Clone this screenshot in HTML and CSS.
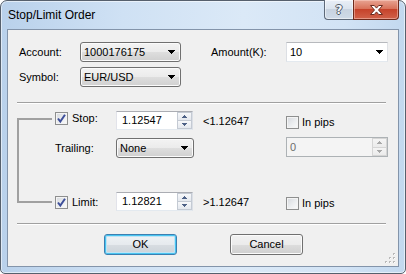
FILE: index.html
```html
<!DOCTYPE html>
<html>
<head>
<meta charset="utf-8">
<title>Stop/Limit Order</title>
<link rel="stylesheet" href="styles.css">
</head>
<body>
<div class="window">
  <div class="titlebar">
    <span class="title">Stop/Limit Order</span>
    <div class="caption-btns">
      <div class="cap-btn help"><span class="q">?</span></div>
      <div class="cap-btn close">
        <svg width="13" height="10" viewBox="0 0 13 10"><path d="M0.5 0.5H4.3L6.5 3.1L8.7 0.5H12.5L8.5 5L12.5 9.5H8.7L6.5 6.9L4.3 9.5H0.5L4.5 5Z" fill="#fff" stroke="#6a2c20" stroke-width="1"/></svg>
      </div>
    </div>
  </div>
  <div class="client">
    <div class="top-grid">
      <span class="lbl">Account:</span>
      <div class="combo"><span class="ctext">1000176175</span><svg class="arrow" width="7" height="4" viewBox="0 0 7 4"><path d="M0 0h7v1h-1v1h-1v1h-1v1h-1v-1h-1v-1h-1v-1h-1z"/></svg></div>
      <span></span>
      <span class="lbl">Amount(K):</span>
      <div class="combo edit"><span class="ctext">10</span><svg class="arrow" width="7" height="4" viewBox="0 0 7 4"><path d="M0 0h7v1h-1v1h-1v1h-1v1h-1v-1h-1v-1h-1v-1h-1z"/></svg></div>
      <span class="lbl">Symbol:</span>
      <div class="combo"><span class="ctext">EUR/USD</span><svg class="arrow" width="7" height="4" viewBox="0 0 7 4"><path d="M0 0h7v1h-1v1h-1v1h-1v1h-1v-1h-1v-1h-1v-1h-1z"/></svg></div>
    </div>

    <div class="sep"></div>

    <div class="mid-grid">
      <div class="bracket"></div>

      <div class="chk-cell stop-chk">
        <span class="chk checked"><svg width="11" height="11" viewBox="0 0 11 11"><path d="M2 5.5L4.3 8.5L9 1.8" fill="none" stroke="#3e4f9a" stroke-width="2"/></svg></span>
        <span class="chk-lbl">Stop:</span>
      </div>
      <div class="spin stop-spin">
        <span class="val">1.12547</span>
        <div class="spin-btns">
          <div class="sb"><svg width="5" height="3" viewBox="0 0 5 3"><path d="M2 0h1v1h1v1h1v1h-5v-1h1v-1h1z"/></svg></div>
          <div class="sb"><svg width="5" height="3" viewBox="0 0 5 3"><path d="M0 0h5v1h-1v1h-1v1h-1v-1h-1v-1h-1z"/></svg></div>
        </div>
      </div>
      <span class="ref-price stop-ref">&lt;1.12647</span>
      <div class="chk-cell pips-chk stop-pips">
        <span class="chk"></span>
        <span class="chk-lbl pips-lbl">In pips</span>
      </div>

      <span class="lbl trail-lbl">Trailing:</span>
      <div class="combo trail-combo"><span class="ctext">None</span><svg class="arrow" width="7" height="4" viewBox="0 0 7 4"><path d="M0 0h7v1h-1v1h-1v1h-1v1h-1v-1h-1v-1h-1v-1h-1z"/></svg></div>
      <div class="spin disabled trail-spin">
        <span class="val">0</span>
        <div class="spin-btns">
          <div class="sb"><svg width="5" height="3" viewBox="0 0 5 3"><path d="M2 0h1v1h1v1h1v1h-5v-1h1v-1h1z"/></svg></div>
          <div class="sb"><svg width="5" height="3" viewBox="0 0 5 3"><path d="M0 0h5v1h-1v1h-1v1h-1v-1h-1v-1h-1z"/></svg></div>
        </div>
      </div>

      <div class="chk-cell limit-chk">
        <span class="chk checked"><svg width="11" height="11" viewBox="0 0 11 11"><path d="M2 5.5L4.3 8.5L9 1.8" fill="none" stroke="#3e4f9a" stroke-width="2"/></svg></span>
        <span class="chk-lbl">Limit:</span>
      </div>
      <div class="spin limit-spin">
        <span class="val">1.12821</span>
        <div class="spin-btns">
          <div class="sb"><svg width="5" height="3" viewBox="0 0 5 3"><path d="M2 0h1v1h1v1h1v1h-5v-1h1v-1h1z"/></svg></div>
          <div class="sb"><svg width="5" height="3" viewBox="0 0 5 3"><path d="M0 0h5v1h-1v1h-1v1h-1v-1h-1v-1h-1z"/></svg></div>
        </div>
      </div>
      <span class="ref-price limit-ref">&gt;1.12647</span>
      <div class="chk-cell pips-chk limit-pips">
        <span class="chk"></span>
        <span class="chk-lbl pips-lbl">In pips</span>
      </div>
    </div>

    <div class="sep bottom-sep"></div>

    <div class="btn-row">
      <div class="btn default">OK</div>
      <div class="btn">Cancel</div>
    </div>

    <svg class="grip" width="11" height="11" viewBox="0 0 11 11">
      <g fill="#b9b9b9">
        <rect x="8" y="0" width="2" height="2"/>
        <rect x="4" y="4" width="2" height="2"/><rect x="8" y="4" width="2" height="2"/>
        <rect x="0" y="8" width="2" height="2"/><rect x="4" y="8" width="2" height="2"/><rect x="8" y="8" width="2" height="2"/>
      </g>
      <g fill="#ffffff">
        <rect x="9" y="1" width="1" height="1"/>
        <rect x="5" y="5" width="1" height="1"/><rect x="9" y="5" width="1" height="1"/>
        <rect x="1" y="9" width="1" height="1"/><rect x="5" y="9" width="1" height="1"/><rect x="9" y="9" width="1" height="1"/>
      </g>
    </svg>
  </div>
</div>
</body>
</html>
```
FILE: styles.css
```css
* { box-sizing: border-box; }
html, body { margin: 0; padding: 0; }
body {
  width: 406px;
  height: 274px;
  overflow: hidden;
  background: #ffffff;
  font-family: "Liberation Sans", Arial, sans-serif;
  font-size: 11px;
  color: #000;
}
.window {
  width: 406px;
  height: 274px;
  border: 1px solid #56606d;
  border-radius: 7px 7px 5px 5px;
  background: linear-gradient(to right, #b9d1eb 0%, #cfe1f4 30%, #dbe9f7 60%, #d2e3f5 85%, #c2d8ef 100%);
  padding: 0 6px 6px 6px;
  display: flex;
  flex-direction: column;
  box-shadow: inset 0 0 0 1px rgba(255,255,255,0.55);
}
.titlebar {
  height: 28px;
  flex: none;
  display: flex;
  justify-content: space-between;
  align-items: flex-start;
  padding-left: 1px;
}
.title {
  font-size: 12px;
  line-height: 15px;
  margin-top: 7px;
  color: #000;
}
.caption-btns {
  display: flex;
  margin-top: -1px;
}
.cap-btn {
  height: 20px;
  display: flex;
  align-items: center;
  justify-content: center;
  border: 1px solid #5d6979;
  border-top: none;
}
.help {
  width: 29px;
  border-right: none;
  border-radius: 0 0 0 4px;
  background: linear-gradient(to bottom, #e9eff7 0%, #dbe4ee 45%, #c8d3e0 50%, #cfdbe8 100%);
  box-shadow: inset 0 0 0 1px rgba(255,255,255,0.5);
}
.q {
  font-family: "DejaVu Sans", sans-serif;
  font-weight: bold;
  font-size: 12px;
  line-height: 14px;
  color: #f4f6f9;
  text-shadow: 1px 0 0 #4e5866, -1px 0 0 #4e5866, 0 1px 0 #4e5866, 0 -1px 0 #4e5866;
}
.close {
  width: 46px;
  border-color: #6e2a1c;
  border-radius: 0 0 4px 0;
  background: linear-gradient(to bottom, #e8a493 0%, #d9735b 45%, #c6432b 50%, #d1624a 100%);
  box-shadow: inset 0 0 0 1px rgba(255,220,210,0.45);
}
.client {
  flex: 1;
  position: relative;
  border: 1px solid #8394aa;
  background: #f0f0f0;
  display: flex;
  flex-direction: column;
}
.top-grid {
  display: grid;
  grid-template-columns: 61px 101px 30px 75px 102px;
  grid-template-rows: 20px 20px;
  row-gap: 5px;
  margin: 12px 0 0 11px;
}
.lbl {
  line-height: 20px;
  white-space: nowrap;
}
.combo {
  height: 20px;
  display: flex;
  align-items: center;
  justify-content: space-between;
  padding: 0 5px 0 3px;
  border: 1px solid #707070;
  border-radius: 3px;
  background: linear-gradient(to bottom, #f3f3f3 0%, #ebebeb 50%, #dedede 50%, #d0d0d0 100%);
  box-shadow: inset 0 0 0 1px #fbfbfb;
}
.combo.edit {
  border-radius: 0;
  border-color: #b7b9bd #e0e2e6 #e3e9ef #dcdfe4;
  background: #ffffff;
  box-shadow: none;
  padding: 0 4px 0 3px;
}
.ctext { white-space: nowrap; }
.arrow { display: block; fill: #000; }
.sep {
  margin: 15px 0 0 9px;
  width: 369px;
  height: 2px;
  border-top: 1px solid #a0a0a0;
  border-bottom: 1px solid #ffffff;
  flex: none;
}
.mid-grid {
  display: grid;
  grid-template-columns: 38px 61px 87px 83px 102px;
  grid-template-rows: 26px 55px 19px;
  margin: 7px 0 0 9px;
}
.bracket {
  grid-column: 1;
  grid-row: 1 / 4;
  margin-top: 7px;
  width: 35px;
  height: 85px;
  border: 2px solid #a0a0a0;
  border-right: none;
}
.chk-cell {
  display: flex;
  align-items: center;
  height: 13px;
  align-self: start;
}
.chk {
  width: 13px;
  height: 13px;
  flex: none;
  border: 1px solid #8e8f8f;
  background: linear-gradient(135deg, #d5d8dd 0%, #eceef0 55%, #fbfbfb 100%);
  box-shadow: inset 0 0 0 1px #f4f4f4;
  display: flex;
  align-items: center;
  justify-content: center;
}
.chk svg { display: block; }
.chk-lbl {
  margin-left: 4px;
  line-height: 13px;
  white-space: nowrap;
}
.pips-lbl { margin-left: 3px; }
.stop-chk { grid-column: 2; grid-row: 1; margin-top: 1px; }
.limit-chk { grid-column: 2; grid-row: 3; margin-top: 4px; }
.stop-pips { grid-column: 5; grid-row: 1; margin-top: 5px; }
.limit-pips { grid-column: 5; grid-row: 3; margin-top: 5px; }
.spin {
  display: flex;
  width: 77px;
  height: 19px;
  align-self: start;
  border: 1px solid;
  border-color: #abadb3 #dbdfe6 #e3e9ef #e2e3ea;
  background: #ffffff;
}
.val {
  flex: 1;
  padding-left: 5px;
  line-height: 17px;
}
.spin-btns {
  width: 15px;
  display: flex;
  flex-direction: column;
}
.sb {
  flex: 1;
  display: flex;
  align-items: center;
  justify-content: center;
  border: 1px solid #c4cad3;
  background: linear-gradient(to bottom, #f7f8fa 0%, #e4e8ee 100%);
}
.sb + .sb { border-top: none; }
.sb svg { display: block; fill: #4d6186; }
.stop-spin { grid-column: 3; grid-row: 1; }
.limit-spin { grid-column: 3; grid-row: 3; width: 77px; }
.ref-price {
  padding-top: 1px;
  line-height: 19px;
  white-space: nowrap;
}
.stop-ref { grid-column: 4; grid-row: 1; }
.limit-ref { grid-column: 4; grid-row: 3; }
.trail-lbl { grid-column: 2; grid-row: 2; margin-top: 1px; }
.trail-combo { grid-column: 3; grid-row: 2; width: 78px; margin-top: 1px; align-self: start; }
.spin.disabled {
  grid-column: 5;
  grid-row: 2;
  width: 102px;
  height: 20px;
  border-color: #adb2b5;
  background: #f4f4f4;
  color: #6d6d6d;
}
.spin.disabled .val { line-height: 18px; padding-left: 3px; }
.spin.disabled .sb {
  border-color: #d5d5d5;
  background: linear-gradient(to bottom, #f4f4f4 0%, #ebebeb 100%);
}
.spin.disabled .sb svg { fill: #a8a8a8; }
.bottom-sep { margin-top: 12px; }
.btn-row {
  display: flex;
  gap: 53px;
  margin: 9px 0 0 96px;
}
.btn {
  width: 73px;
  height: 21px;
  border: 1px solid #707070;
  border-radius: 3px;
  background: linear-gradient(to bottom, #f2f2f2 0%, #ebebeb 50%, #dddddd 50%, #cfcfcf 100%);
  box-shadow: inset 0 0 0 1px #fbfbfb;
  text-align: center;
  line-height: 19px;
}
.btn.default {
  border-color: #3c7fb1;
  box-shadow: inset 0 0 0 1px #48c4f0, inset 0 0 0 2px #bfe3f5;
  background: linear-gradient(to bottom, #eef2f5 0%, #e6eaee 50%, #d8dde2 50%, #ccd3d9 100%);
}
.grip {
  position: absolute;
  right: 2px;
  bottom: 2px;
}
```
